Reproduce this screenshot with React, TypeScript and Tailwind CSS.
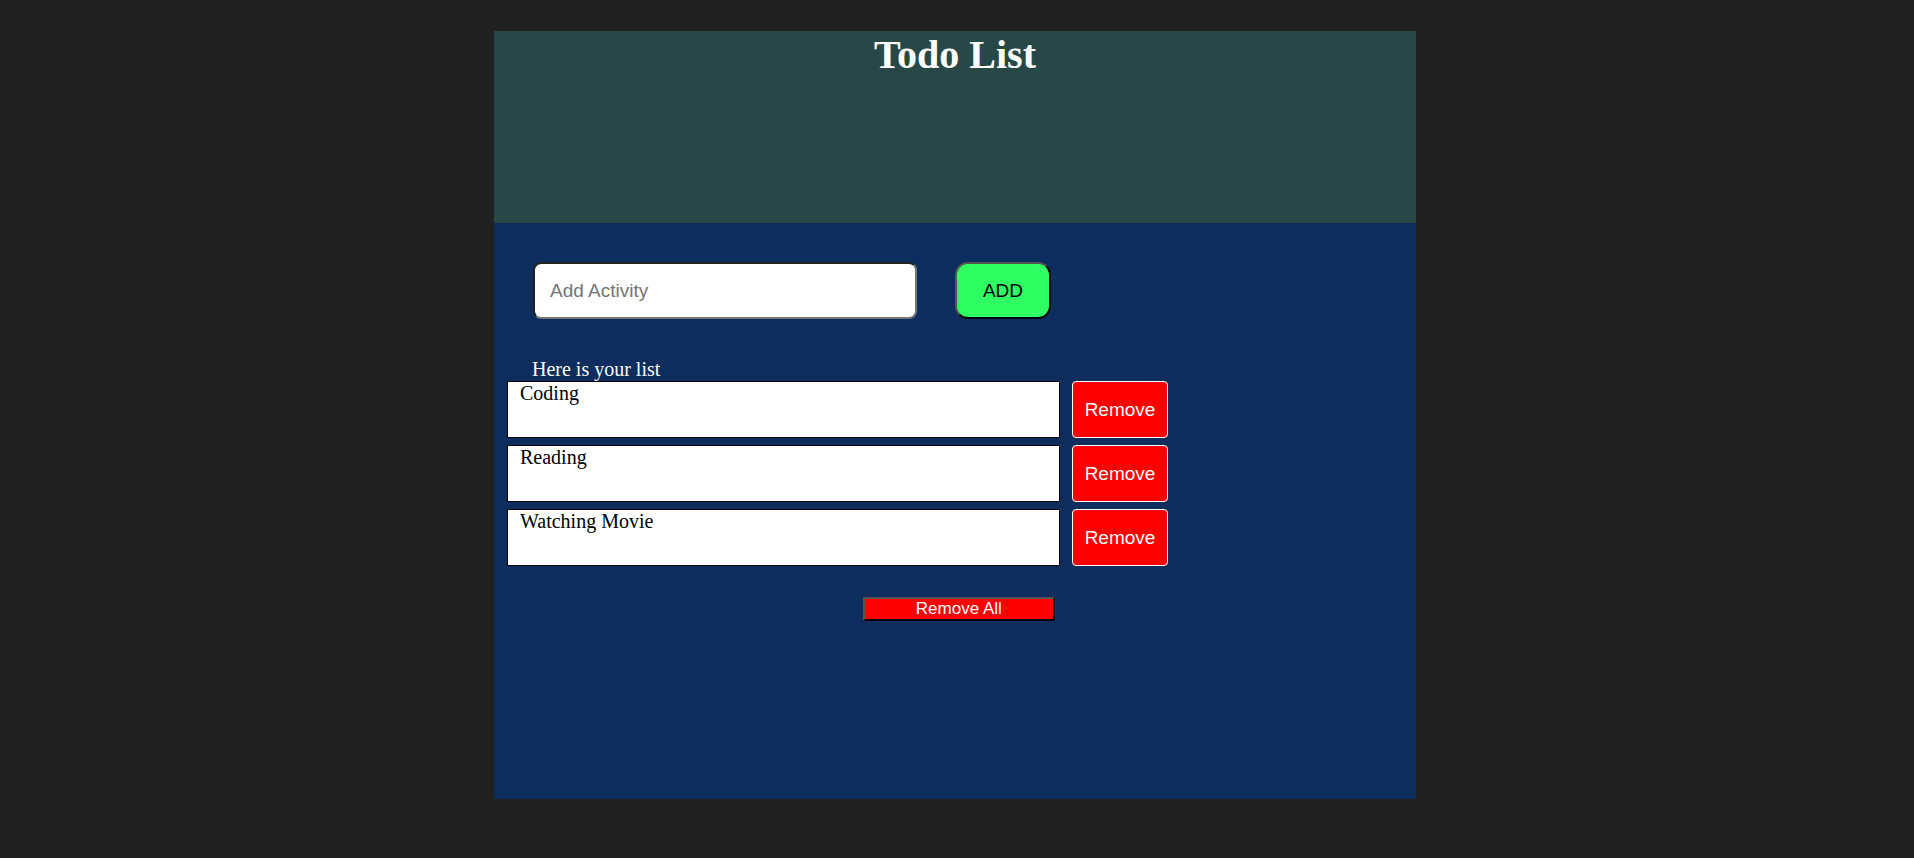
import { useState } from "react";
import type { FormEvent } from "react";

export default function App() {
  const [items, setItems] = useState<string[]>(["Coding", "Reading", "Watching Movie"]);
  const [draft, setDraft] = useState("");

  const addItem = (event: FormEvent) => {
    event.preventDefault();
    const text = draft.trim();
    if (text) {
      setItems([...items, text]);
      setDraft("");
    }
  };

  return (
    <div className="min-h-screen bg-[#212121] pt-[31px] pr-1 pb-14 font-['Liberation_Serif',serif]">
      <main className="mx-auto flex min-h-[768px] w-full max-w-[922px] flex-col bg-[#0c2d5d] text-xl leading-[23px] text-white">
        <header className="h-48 bg-[#284848] text-center">
          <h1 className="text-[40px] leading-[47px] font-bold">Todo List</h1>
        </header>

        <form onSubmit={addItem} className="flex gap-[38px] px-[39px] pt-[39px]">
          <input
            type="text"
            aria-label="Add Activity"
            placeholder="Add Activity"
            value={draft}
            onChange={(event) => setDraft(event.target.value)}
            className="h-[57px] w-96 rounded-lg border-2 border-t-[#222222] border-r-[#767676] border-b-[#767676] border-l-[#222222] bg-white px-[15px] font-['Liberation_Sans',sans-serif] text-[19px] text-black placeholder:text-[#757575]"
          />
          <button
            type="submit"
            className="h-[57px] w-24 rounded-[13px] border-2 border-t-[#555555] border-r-black border-b-black border-l-[#555555] bg-[#2fff62] font-['Liberation_Sans',sans-serif] text-[19px] text-black"
          >
            ADD
          </button>
        </form>

        <p className="px-[38px] pt-[39px]">Here is your list</p>

        <ul className="flex flex-col gap-[7px] px-[13px]">
          {items.map((item, index) => (
            <li key={index} className="flex gap-3">
              <div className="h-[57px] w-[553px] border border-black bg-white px-3 text-black">{item}</div>
              <button
                type="button"
                onClick={() => setItems(items.filter((_, i) => i !== index))}
                className="h-[57px] w-24 rounded border border-white bg-[#ff0000] font-['Liberation_Sans',sans-serif] text-[19px]"
              >
                Remove
              </button>
            </li>
          ))}
        </ul>

        <button
          type="button"
          onClick={() => setItems([])}
          className="mt-[31px] ml-[40%] flex h-6 w-48 items-center justify-center border-2 border-t-[#555555] border-r-black border-b-black border-l-[#555555] bg-[#ff0000] font-['Liberation_Sans',sans-serif] text-[17px] leading-5"
        >
          Remove All
        </button>
      </main>
    </div>
  );
}
